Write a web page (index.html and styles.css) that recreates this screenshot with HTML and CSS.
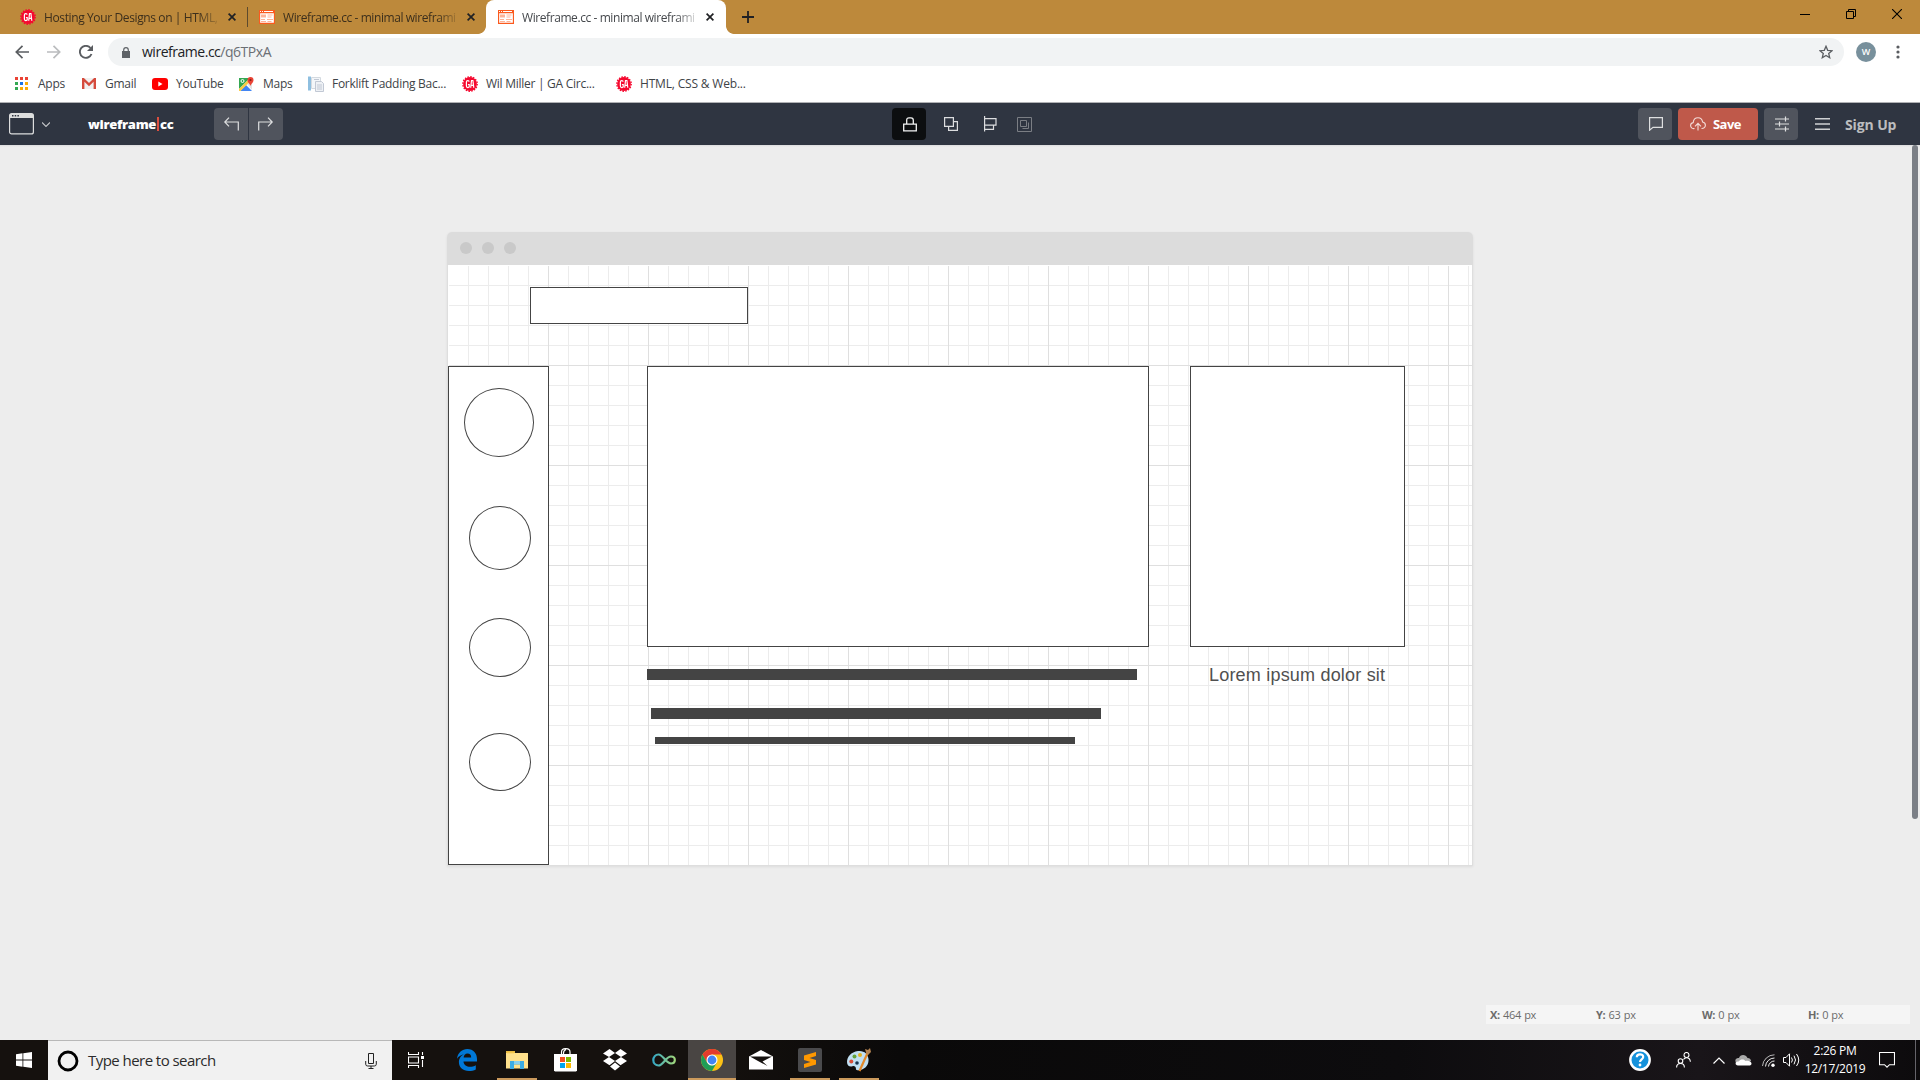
FILE: index.html
```
<!DOCTYPE html>
<html lang="en">
<head>
<meta charset="utf-8">
<title>Wireframe.cc - minimal wireframing tool</title>
<link rel="stylesheet" href="styles.css">
</head>
<body>
<svg class="defs" width="0" height="0">
  <symbol id="ga" viewBox="0 0 16 16"><circle cx="8" cy="8" r="6.9" fill="#f5092f"/><circle cx="8" cy="8" r="7.2" fill="none" stroke="#f5092f" stroke-width="1.4" stroke-dasharray="1.5 1.33"/><path d="M7.2 5.6C7 4.300 4.400 4.100 4.400 6v4c0 2 2.700 1.900 2.800.6V8.500H5.900M8.700 11.800L9.500 4.500h1.400l.9 7.300M9.200 9.400h2.200" fill="none" stroke="#fff" stroke-width="1.200"/></symbol>
  <symbol id="wf" viewBox="0 0 16 14"><path fill="#fff" d="M0 0h16v14H0z"/><path d="M.5 .5h15v13H.5zM0 2.500h16" fill="none" stroke="#fb5a1e" stroke-width="1.300"/><path fill="#fb5a1e" d="M0 0h16v3H0z"/><path fill="#fff" d="M1 1h1v1H1zM3 1h1v1H3zM5 1h9v1H5z"/><path fill="#fdb397" d="M2 4.500h5v3H2zM8.500 4.500h5v1h-5zM8.500 6.500h4v1h-4zM2 9h4v1H2zM8 9h6v1H8zM2 11h5v1H2zM8.500 11h4v1h-4z"/></symbol>
  <symbol id="x" viewBox="0 0 8 8"><path d="M.6.6l6.800 6.800M7.400.6L.6 7.400" fill="none" stroke="currentColor" stroke-width="1.700"/></symbol>
</svg>

<header class="tabs">
  <div class="tab first"><svg width="16" height="16"><use href="#ga"/></svg><span class="tab-title tight">Hosting Your Designs on | HTML,</span><svg class="close" width="8" height="8"><use href="#x"/></svg></div>
  <div class="tab second"><svg width="16" height="14"><use href="#wf"/></svg><span class="tab-title">Wireframe.cc - minimal wireframi</span><svg class="close" width="8" height="8"><use href="#x"/></svg></div>
  <div class="tab active"><svg width="16" height="14"><use href="#wf"/></svg><span class="tab-title">Wireframe.cc - minimal wireframi</span><svg class="close" width="8" height="8"><use href="#x"/></svg></div>
  <svg class="new-tab" width="12" height="12" viewBox="0 0 12 12"><path d="M6 0v12M0 6h12" stroke="#202124" stroke-width="1.800"/></svg>
  <div class="win-controls">
    <svg width="10" height="10" viewBox="0 0 10 10"><path d="M0 5.500h10" stroke="#000"/></svg>
    <svg width="10" height="10" viewBox="0 0 10 10"><path d="M.5 2.500h7v7h-7zM2.500 2.500v-2h7v7h-2" fill="none" stroke="#000"/></svg>
    <svg width="10" height="10" viewBox="0 0 10 10"><path d="M0 0l10 10M10 0L0 10" stroke="#000" stroke-width="1.100"/></svg>
  </div>
</header>

<nav class="toolbar">
  <svg width="14" height="14" viewBox="0 0 14 14"><path d="M14 7H1.500M7.500.8L1.300 7l6.200 6.200" fill="none" stroke="#5a5d61" stroke-width="1.700"/></svg>
  <svg width="14" height="14" viewBox="0 0 14 14"><path d="M0 7h12.500M6.500.8L12.700 7l-6.200 6.200" fill="none" stroke="#babcbe" stroke-width="1.700"/></svg>
  <svg width="14" height="14" viewBox="0 0 14 14"><path d="M12.500 9A6 6 0 1 1 11.500 3" fill="none" stroke="#5a5d61" stroke-width="1.900"/><path d="M14 0v6H8z" fill="#5a5d61"/></svg>
  <div class="omnibox">
    <svg width="8" height="11" viewBox="0 0 8 11"><path d="M0 4h8v7H0z" fill="#5f6368"/><path d="M1.700 4.500V3a2.300 2.300 0 0 1 4.600 0v1.500" fill="none" stroke="#5f6368" stroke-width="1.200"/></svg>
    <span class="url">wireframe.cc<i>/q6TPxA</i></span>
    <svg class="star" width="14" height="14" viewBox="0 0 14 14"><path d="M7 1.300l1.700 4 4.300.4-3.300 2.800 1 4.200L7 10.500l-3.700 2.200 1-4.200L1 5.700l4.300-.4z" fill="none" stroke="#5a5d61" stroke-width="1.300"/></svg>
  </div>
  <div class="avatar">W</div>
  <svg class="dots" width="4" height="14" viewBox="0 0 4 14"><g fill="#5a5d61"><circle cx="2" cy="2" r="1.600"/><circle cx="2" cy="7" r="1.600"/><circle cx="2" cy="12" r="1.600"/></g></svg>
</nav>

<div class="bookmarks">
  <a class="bm apps"><svg width="13" height="13" viewBox="0 0 13 13"><path fill="#ea4335" d="M0 0h3v3H0zM5 0h3v3H5zM10 0h3v3h-3z"/><path fill="#34a853" d="M0 5h3v3H0zM0 10h3v3H0z"/><path fill="#1a73e8" d="M5 5h3v3H5z"/><path fill="#fbab05" d="M10 5h3v3h-3zM5 10h3v3H5zM10 10h3v3h-3z"/></svg>Apps</a>
  <a class="bm gmail"><svg width="14" height="11" viewBox="0 0 14 11"><path fill="#f1f1f1" d="M0 0h14v11H0z"/><path d="M1.200 11V1L7 6.500 12.800 1v10" fill="none" stroke="#d54b3d" stroke-width="2.400"/></svg>Gmail</a>
  <a class="bm yt"><svg width="16" height="12" viewBox="0 0 16 12"><rect width="16" height="12" rx="3" fill="#f00"/><path d="M6.300 3.500v5l4.200-2.500z" fill="#fff"/></svg>YouTube</a>
  <a class="bm maps"><svg width="16" height="14" viewBox="0 0 16 14"><path fill="#34a853" d="M0 1h11L0 12z"/><path fill="#4285f4" d="M1 14l6-6 6 6z"/><path fill="#e3e3e3" d="M8 7l4-4 1 1v9z"/><path fill="#fbcb43" d="M0 12L10 2l1.500 2L1.500 14H0z"/><path fill="#34a853" d="M0 1h8l1 1-9 8z"/><circle cx="3.500" cy="4" r="1.500" fill="none" stroke="#fff"/><path fill="#ea4335" d="M11.500 9C11 6.500 8.500 6 8.500 3a3 3 0 0 1 6 0c0 3-2.500 3.500-3 6z"/><circle cx="11.500" cy="3" r="1.100" fill="#8a1c14"/></svg>Maps</a>
  <a class="bm doc"><svg width="16" height="16" viewBox="0 0 16 16"><path fill="#8ebfe0" d="M0 0.500h3v14H0z"/><path d="M3.500 1.500h9v11h-9z" fill="#f3f6f9" stroke="#d4dae0"/><path d="M7.500 5.500h6l2 2v8h-8z" fill="#eef1f5" stroke="#c1c8d4"/><path d="M9 9h5M9 11h5M9 13h5M6 3.500h5" stroke="#c1c8d4"/></svg>Forklift Padding Bac...</a>
  <a class="bm wil"><svg width="16" height="16"><use href="#ga"/></svg>Wil Miller | GA Circ...</a>
  <a class="bm html"><svg width="16" height="16"><use href="#ga"/></svg>HTML, CSS &amp; Web...</a>
</div>

<div class="appbar">
  <div class="bar-left">
    <svg width="25" height="22" viewBox="0 0 25 22"><rect x=".6" y=".6" width="23.800" height="20.300" rx="2" fill="none" stroke="#dcdddd" stroke-width="1.200"/><path d="M1 1h23v4H1z" fill="#dcdddd"/><path d="M3 2h1.500v1.500H3zM5.700 2h1.500v1.500H5.700zM8.400 2h1.500v1.500H8.400z" fill="#2f3541"/></svg>
    <svg class="chev" width="8" height="5" viewBox="0 0 8 5"><path d="M0 .5l4 4 4-4" fill="none" stroke="#c5c7ca" stroke-width="1.100"/></svg>
    <div class="logo">wireframe<b></b>cc</div>
    <div class="history">
      <button><svg width="16" height="14" viewBox="0 0 16 14"><path d="M6 .7L1.800 5 6 9.300M2 5h13.300v8.500" fill="none" stroke="#dedfe0" stroke-width="1.200"/></svg></button>
      <button><svg width="16" height="14" viewBox="0 0 16 14"><path d="M10 .7L14.200 5 10 9.300M14 5H.7v8.500" fill="none" stroke="#dedfe0" stroke-width="1.200"/></svg></button>
    </div>
  </div>
  <div class="bar-mid">
    <button class="lock"><svg width="14" height="15" viewBox="0 0 14 15"><path d="M.7 7.200h12.600v6.600H.7zM3.700 7V3.200Q3.700.8 6 .8h2q2.300 0 2.300 2.400V7" fill="none" stroke="#f2f3f3" stroke-width="1.300"/></svg></button>
    <svg class="dup" width="14" height="14" viewBox="0 0 14 14"><path d="M.6.600h8.800v8.800H.6zM9.500 4.600h3.900v8.800H4.600V9.500" fill="none" stroke="#dcdddf" stroke-width="1.200"/></svg>
    <svg class="align" width="13" height="16" viewBox="0 0 13 16"><path d="M.6 0v15.500M.6 2.600H12v6.500H.6M9.500 9v4.400H.6" fill="none" stroke="#dcdddf" stroke-width="1.200"/></svg>
    <svg width="15" height="15" viewBox="0 0 15 15"><path d="M.5.500h14v14H.5zM3.500 3.500h6v6h-6zM11.500 5.500v6h-6" fill="none" stroke="#7b7e84"/></svg>
  </div>
  <div class="bar-right">
    <button class="sq chat"><svg width="14" height="14" viewBox="0 0 14 14"><path d="M.6.600h12.800v9.800H4L.6 13.200z" fill="none" stroke="#dedfe0" stroke-width="1.200"/></svg></button>
    <button class="save"><svg width="16" height="14" viewBox="0 0 16 14"><path d="M4.500 11.500C2 12 .6 10.500.6 8.600c0-1.700 1.200-2.800 2.600-3C3.500 2.500 5.500.7 8 .7c2.700 0 4.300 1.900 4.600 4.300 1.800.3 2.800 1.600 2.800 3.300 0 2-1.500 3.300-3.900 3.200M8 13.500V6.500M5 9.300l3-3 3 3" fill="none" stroke="#f4dcd8" stroke-width="1.100"/></svg>Save</button>
    <button class="sq sliders"><svg width="14" height="16" viewBox="0 0 14 16"><path d="M0 3h14M0 8h14M0 13h14M10.500.5v5M4.500 5.500v5M10.500 10.500v5" stroke="#dedfe0" stroke-width="1.200"/></svg></button>
    <svg class="burger" width="15" height="12" viewBox="0 0 15 12"><path d="M0 .8h15M0 6h15M0 11.200h15" stroke="#cfd1d3" stroke-width="1.500"/></svg>
    <span class="signup">Sign Up</span>
  </div>
</div>

<main class="workspace">
  <section class="mock">
    <div class="mock-title"><i></i><i></i><i></i></div>
    <div class="canvas">
      <div class="shape search-box"></div>
      <div class="shape side"></div>
      <div class="shape oval o1"></div>
      <div class="shape oval o2"></div>
      <div class="shape oval o3"></div>
      <div class="shape oval o4"></div>
      <div class="shape hero"></div>
      <div class="shape aside"></div>
      <div class="line l1"></div>
      <div class="line l2"></div>
      <div class="line l3"></div>
      <div class="caption">Lorem ipsum dolor sit</div>
    </div>
  </section>
  <div class="scroll-thumb"></div>
  <div class="status"><span><b>X:</b> 464 px</span><span><b>Y:</b> 63 px</span><span><b>W:</b> 0 px</span><span><b>H:</b> 0 px</span></div>
</main>

<footer class="taskbar">
  <div class="start"><svg width="16" height="16" viewBox="0 0 16 16"><path fill="#fff" d="M0 2.200l6.500-.9v6.300H0zM7.300 1.200L16 0v7.600H7.300zM0 8.400h6.500v6.300L0 13.800zM7.300 8.400H16V16l-8.700-1.200z"/></svg></div>
  <div class="search">
    <svg width="22" height="22" viewBox="0 0 22 22"><circle cx="11" cy="11" r="9" fill="none" stroke="#000" stroke-width="2.800"/></svg>
    <span>Type here to search</span>
    <svg class="mic" width="12" height="16" viewBox="0 0 12 16"><path d="M3.500.5h5v10h-5zM.7 8v3.200q0 1.800 2 1.800h6.600q2 0 2-1.800V8M6 13v2.500M3.500 15.500h5" fill="none" stroke="#222"/></svg>
  </div>
  <div class="app view"><svg width="16" height="16" viewBox="0 0 16 16"><path d="M.5 0v2.500h10V0M.5 16v-2.500h10V16M.5 5h10v6H.5zM14.500 0v3M14.500 8v7" fill="none" stroke="#fff" stroke-width="1.100"/><path fill="#fff" d="M13 4h3v3h-3z"/></svg></div>
  <div class="app edge"><svg width="20" height="22" viewBox="0 0 20 22"><path fill="#0078d7" d="M0 9.800C.8 3.500 5.300 0 10.300 0 16.500 0 20 4.500 20 10v2.600H6.500c.1 3.700 3.400 5.200 6.400 5.200 2.200 0 4.100-.5 5.900-1.600v4.300c-1.900 1-4.400 1.500-6.900 1.500-6 0-10-3.200-10-8.900 0-3.900 2.300-7 5.900-8.200C4.500 5.500 1.500 7 0 9.800zm6.600-1.300h7.600c0-2.500-1.300-4-3.700-4-2.300 0-3.700 1.800-3.900 4z"/></svg></div>
  <div class="app run"><svg width="22" height="18" viewBox="0 0 22 18"><path fill="#e9b93f" d="M0 0h9v3H0z"/><path fill="#ffe18c" d="M0 2h22v15.500H0z"/><path fill="#f4c74c" d="M1 .7h7v1.600H1z"/><path fill="#3cace4" d="M4 10h14v8h-4v-4.500H8V18H4z"/><path fill="#85d0f0" d="M8 10h6v3H8z"/></svg></div>
  <div class="app"><svg width="24" height="24" viewBox="0 0 24 24"><path d="M7.500 7V4q0-3.300 4-3.300H12q4 0 4 3.300v3M9.500 7V5q0-2.500 2.500-3.500" fill="none" stroke="#fff" stroke-width="1.200"/><path fill="#fff" d="M0 6h23v16.500l-1 1H1l-1-1z"/><path fill="#f25022" d="M6 9h5v5H6z"/><path fill="#7fba00" d="M12 9h5v5h-5z"/><path fill="#00a4ef" d="M6 15h5v5H6z"/><path fill="#ffb900" d="M12 15h5v5h-5z"/></svg></div>
  <div class="app"><svg width="24" height="22" viewBox="0 0 24 22"><path fill="#fff" d="M6.500 0L12 4 6 8 0 4.500zM17.500 0L24 4.500 18 8l-6-4zM0 12l6-4 6 4-5.500 4.200zM24 12l-6-4-6 4 5.500 4.200zM12 13.500l5 4L12 21.500l-5-4z"/></svg></div>
  <div class="app"><svg width="24" height="14" viewBox="0 0 24 14"><defs><linearGradient id="inf"><stop stop-color="#36a9c4"/><stop offset="1" stop-color="#9fd67c"/></linearGradient></defs><path d="M6.500 1.500C3.500 1.500 1.300 4 1.300 7s2.200 5.500 5.200 5.500c4.500 0 7.500-9 12.500-9 2.200 0 3.800 1.500 3.800 3.500s-1.600 3.500-3.800 3.500c-5 0-8-9-12.500-9z" fill="none" stroke="url(#inf)" stroke-width="2.200"/></svg></div>
  <div class="app current"><svg width="22" height="22" viewBox="0 0 22 22"><circle cx="11" cy="11" r="11" fill="#fbc116"/><path fill="#e33b2e" d="M1.500 5.500A11 11 0 0 1 20.500 5.500H11L6.200 13.700z"/><path fill="#1f9d57" d="M1.500 5.500L6.200 13.700 11 16.500 15.800 13.700 11 22A11 11 0 0 1 1.500 5.500z"/><circle cx="11" cy="11" r="5.500" fill="#fff"/><circle cx="11" cy="11" r="4.400" fill="#4285f4"/></svg></div>
  <div class="app"><svg width="24" height="20" viewBox="0 0 24 20"><path fill="#fff" d="M0 6.500L12 0l12 6.500V19.500H0z"/><path fill="#15110f" d="M1 6.500h22L13.500 11.500l5 4.500L9 11z"/></svg></div>
  <div class="app run"><svg width="24" height="24" viewBox="0 0 24 24"><rect width="24" height="24" rx="2" fill="#4a4a4c"/><path fill="#ff9800" d="M6 7.500L18 4v4l-6.500 2L18 12v4.500L6 20v-4l6.500-2L6 12z"/></svg></div>
  <div class="app run"><svg width="24" height="24" viewBox="0 0 24 24"><path fill="#c0dff2" d="M11 3C4 4 0 9 0 14c0 4 3 5 5.500 4.200 2-.6 3.500.8 3.500 3C9 22 11 22.500 13 22c6-1 9-6 8.500-11S17 2.200 11 3z"/><circle cx="7.500" cy="8.500" r="2" fill="#63a338"/><circle cx="13" cy="7" r="2" fill="#e4b321"/><circle cx="4.300" cy="13.500" r="2" fill="#d84d36"/><circle cx="10" cy="15" r="1.800" fill="#17334d"/><path d="M21 4l-8.500 19" stroke="#e38a2c" stroke-width="2.200"/><path fill="#b48452" d="M19 4.500L18 1l3 1 2-2 1 4-3 3z"/></svg></div>
  <div class="tray">
    <svg class="help" width="22" height="22" viewBox="0 0 22 22"><circle cx="11" cy="11" r="9.700" fill="#1592dc" stroke="#fff" stroke-width="2.400"/><path d="M7.800 8.300c0-4 6.400-3.900 6.400-.3 0 2.300-3.200 2.400-3.200 5" fill="none" stroke="#fff" stroke-width="2.200"/><circle cx="11" cy="16" r="1.400" fill="#fff"/></svg>
    <svg class="people" width="15" height="16" viewBox="0 0 15 16"><g fill="none" stroke="#fff" stroke-width="1.100"><circle cx="4.500" cy="9" r="2.300"/><path d="M.6 15.500q0-4 3.900-4t3.900 4"/><circle cx="10.500" cy="3" r="2.500"/><path d="M7.500 7.500q1-1.800 3-1.800 3.500 0 3.900 4"/></g></svg>
    <svg class="up" width="12" height="7" viewBox="0 0 12 7"><path d="M.5 6.500L6 1l5.500 5.500" fill="none" stroke="#fff" stroke-width="1.200"/></svg>
    <svg class="cloud" width="17" height="11" viewBox="0 0 17 11"><path fill="#aaa" d="M1 8C-1 4 2 2.500 4 3c1-4 7-4 8.500 0C15 3 16 4.500 16 6z"/><path fill="#fff" d="M3 10.500C-.5 10.500 0 6 3.500 6.500c2-3 6-2.500 7-.5 3-1 6 .5 6 2.500 0 1.500-1 2-2.500 2z"/></svg>
    <svg class="wifi" width="13" height="13" viewBox="0 0 13 13"><g fill="none" stroke="#eee"><path d="M.5 12A12 12 0 0 1 12.500.8" opacity=".75"/><path d="M3.500 12.500a9 9 0 0 1 9-8.500M6.500 12.500a6 6 0 0 1 6-5.500" /></g><circle cx="11" cy="11.300" r="1.700" fill="#fff"/></svg>
    <svg class="vol" width="17" height="14" viewBox="0 0 17 14"><path d="M.5 4.500H3l3.500-3.700v12.400L3 9.500H.5zM8.500 4.500q1.800 2.500 0 5M11 2.700q3 4.300 0 8.600M13.500 1q4.500 6 0 12" fill="none" stroke="#fff"/></svg>
    <div class="clock"><span>2:26 PM</span><span>12/17/2019</span></div>
    <svg class="note" width="16" height="16" viewBox="0 0 16 16"><path d="M.5.500h15v12.200h-5L8 15.200l-2.500-2.500h-5z" fill="none" stroke="#fff" stroke-width="1.100"/></svg>
    <div class="desk"></div>
  </div>
</footer>
</body>
</html>
```
FILE: styles.css
```
* { box-sizing: border-box; }
body {
  margin: 0;
  width: 1920px;
  height: 1080px;
  overflow: hidden;
  display: flex;
  flex-direction: column;
  font-family: "Open Sans", "Noto Sans", sans-serif;
  font-size: 12px;
  background: #ededed;
}
svg { display: block; flex: none; }
.defs { position: absolute; }
button { border: 0; padding: 0; font: inherit; color: inherit; display: flex; align-items: center; justify-content: center; }

/* tab strip */
.tabs { height: 34px; flex: none; display: flex; background: #bd893b; color: #3c2f1c; }
.tab { height: 34px; display: flex; align-items: center; gap: 8px; }
.tab.first { width: 248px; padding-left: 20px; border-right: 1px solid #5d4a2d; height: 20px; margin-top: 7px; }
.tab.second { width: 238px; padding-left: 11px; }
.tab.active { width: 240px; padding-left: 12px; background: #fff; border-radius: 8px 8px 0 0; color: #45484c; position: relative; }
.tab.active::before, .tab.active::after {
  content: ""; position: absolute; bottom: 0; width: 8px; height: 8px;
}
.tab.active::before { left: -8px; background: radial-gradient(circle at 0 0, transparent 7.5px, #fff 8.2px); }
.tab.active::after { right: -8px; background: radial-gradient(circle at 100% 0, transparent 7.5px, #fff 8.2px); }
.tab-title {
  width: 176px; margin-right: -2px; white-space: nowrap; letter-spacing: -0.42px;
  -webkit-mask-image: linear-gradient(90deg, #000 154px, transparent 178px);
  mask-image: linear-gradient(90deg, #000 154px, transparent 178px);
}
.tab-title.tight { letter-spacing: -0.38px; }
.close { margin-left: 2px; color: #202124; }
.new-tab { margin: 11px 0 0 16px; }
.win-controls { margin-left: auto; display: flex; gap: 36px; padding: 9px 18px 0 0; }

/* address bar */
.toolbar { height: 36px; flex: none; background: #fff; display: flex; align-items: center; gap: 18px; padding-left: 15px; }
.omnibox { width: 1736px; height: 28px; margin-left: -3px; border-radius: 14px; background: #f1f3f4; display: flex; align-items: center; padding: 0 11px 0 14px; }
.url { margin-left: 12px; padding-bottom: 1px; font-size: 14px; color: #202124; letter-spacing: -0.48px; }
.url i { font-style: normal; color: #6b6f74; }
.star { margin-left: auto; }
.avatar { width: 20px; height: 20px; margin-left: -6px; border-radius: 50%; background: #78909c; color: #fff; font: 600 9px/20px "Open Sans", sans-serif; text-align: center; }
.dots { margin-left: 2px; }

/* bookmarks */
.bookmarks { height: 33px; flex: none; background: #fff; border-bottom: 1px solid #b0b1b4; display: flex; align-items: center; padding: 0 0 5px 15px; color: #404347; white-space: nowrap; }
.bm { display: flex; align-items: center; letter-spacing: -0.27px; gap: 8px; }
.apps { width: 67px; gap: 10px; }
.gmail { width: 70px; gap: 9px; }
.yt { width: 87px; }
.maps { width: 69px; }
.doc { width: 154px; }
.wil { width: 154px; }
.html { letter-spacing: -0.18px; }

/* application bar */
.appbar { height: 42px; flex: none; display: flex; justify-content: space-between; background: #2f3541; color: #fff; }
.bar-left, .bar-mid, .bar-right { display: flex; align-items: center; }
.bar-left { width: 892px; padding-left: 9px; }
.chev { margin-left: 8px; }
.logo { width: 126px; margin-left: 38px; display: flex; align-items: center; font-weight: 800; font-size: 13px; letter-spacing: -0.3px; }
.logo b { width: 2px; height: 14px; margin: 0 1px; background: #dc4f40; }
.history { display: flex; gap: 1px; }
.history button { width: 34px; height: 32px; background: #50545d; border-radius: 4px 0 0 4px; }
.history button + button { border-radius: 0 4px 4px 0; }
.bar-mid { flex: 1; }
.lock { width: 34px; height: 32px; padding-left: 1px; background: #0c0e10; border-radius: 4px; }
.dup { margin-left: 18px; }
.align { margin: 0 20px 0 26px; }
.bar-right { width: 282px; }
.sq { width: 34px; height: 32px; border-radius: 4px; background: #50545d; padding-left: 1px; }
.save { width: 80px; height: 32px; margin: 0 6px; border-radius: 4px; background: #bf594a; font-weight: 700; font-size: 13px; gap: 7px; letter-spacing: -0.5px; padding-right: 5px; }
.burger { margin-left: 17px; }
.signup { margin-left: 15px; font-weight: 700; font-size: 14px; color: #bcbdbf; letter-spacing: -0.12px; }

/* drawing area */
.workspace { height: 895px; flex: none; position: relative; background: linear-gradient(#dcdcdd, #ededed 2px); }
.mock { width: 1026px; margin: 87px 0 0 447px; display: flex; flex-direction: column; box-shadow: 0 1px 3px rgba(0,0,0,.07); border-radius: 5px 5px 0 0; position: absolute; }
.mock-title { height: 33px; border-radius: 5px 5px 0 0; background: #dcdcdc; display: flex; gap: 10px; padding: 10px 13px; }
.mock-title i { width: 12px; height: 12px; border-radius: 50%; background: #c9c9c9; }
.canvas {
  position: relative; height: 601px; border: 1px solid #dedede; border-top: 0; background-color: #fff;
  background-image:
    linear-gradient(90deg, #dfdfdf 1px, transparent 1px),
    linear-gradient(#dfdfdf 1px, transparent 1px),
    linear-gradient(90deg, #ececec 1px, transparent 1px),
    linear-gradient(#ececec 1px, transparent 1px);
  background-size: 100px 100%, 100% 100px, 20px 100%, 100% 20px;
  background-position: 100px 0, 0 100px, 0 0, 0 0;
}
.canvas::before { content: ""; position: absolute; inset: 0 auto auto 0; width: 100%; height: 1px; background: #fff; }
.canvas::after { content: ""; position: absolute; left: 0; top: 0; width: 1px; height: 100%; background: #fff; }
.shape { position: absolute; z-index: 1; background: #fff; border: 1px solid #444; }
.search-box { left: 82px; top: 22px; width: 218px; height: 37px; }
.side { left: 0; top: 101px; width: 101px; height: 499px; }
.hero { left: 199px; top: 101px; width: 502px; height: 281px; }
.aside { left: 742px; top: 101px; width: 215px; height: 281px; }
.oval { border-radius: 50%; }
.o1 { left: 16px; top: 123px; width: 70px; height: 69px; }
.o2 { left: 21px; top: 241px; width: 62px; height: 64px; }
.o3 { left: 21px; top: 353px; width: 62px; height: 59px; }
.o4 { left: 21px; top: 468px; width: 62px; height: 58px; }
.line { position: absolute; z-index: 1; background: #444; height: 11px; }
.l1 { left: 199px; top: 404px; width: 490px; }
.l2 { left: 203px; top: 443px; width: 450px; }
.l3 { left: 207px; top: 472px; width: 420px; height: 7px; }
.caption { position: absolute; z-index: 1; left: 761px; top: 399px; font: 18px/22px "Liberation Sans", Arial, sans-serif; letter-spacing: 0.2px; color: #505050; white-space: nowrap; }
.scroll-thumb { position: absolute; right: 2px; top: 0; width: 6px; height: 674px; border-radius: 3px; background: #7b7f86; }
.status { position: absolute; left: 1486px; top: 860px; width: 424px; height: 19px; background: #f5f5f5; display: grid; grid-template-columns: repeat(4, 106px); align-items: center; font-size: 11px; color: #6b6b6b; letter-spacing: -0.3px; word-spacing: 0.6px; }
.status span { padding-left: 4px; }

/* taskbar */
.taskbar { height: 40px; flex: none; display: flex; background: linear-gradient(90deg, #15110e 0, #15110e 700px, #0a0909 900px, #0d0c0e 1400px, #191519 1700px, #0d0b0d 1920px); color: #fff; }
.start { width: 48px; display: grid; place-items: center; }
.search { width: 344px; background: #f1f1f1; border-top: 1px solid #b8b8b8; display: flex; align-items: center; padding: 0 15px 0 9px; color: #2b2b2b; font-size: 15px; letter-spacing: -0.55px; }
.search span { margin-left: 9px; padding-bottom: 1px; }
.mic { margin-left: auto; }
.app { width: 49px; display: grid; place-items: center; position: relative; }
.view { width: 48px; }
.edge { width: 52px; padding-left: 2px; }
.app.run { background: linear-gradient(#cb9a5c, #cb9a5c) center bottom / 40px 2px no-repeat; }
.app.current { width: 48px; background: linear-gradient(#cb9a5c, #cb9a5c) bottom / 100% 2px no-repeat, #494543; }
.tray { margin-left: auto; display: flex; align-items: center; }
.people { margin-left: 25px; }
.up { margin-left: 22px; }
.cloud { margin-left: 10px; }
.wifi { margin-left: 10px; }
.vol { margin-left: 8px; }
.clock { width: 70px; display: flex; flex-direction: column; text-align: center; line-height: 18px; letter-spacing: -0.3px; }
.note { margin-left: 9px; }
.desk { width: 5px; height: 40px; margin-left: 20px; border-left: 1px solid #66646a; }
```
